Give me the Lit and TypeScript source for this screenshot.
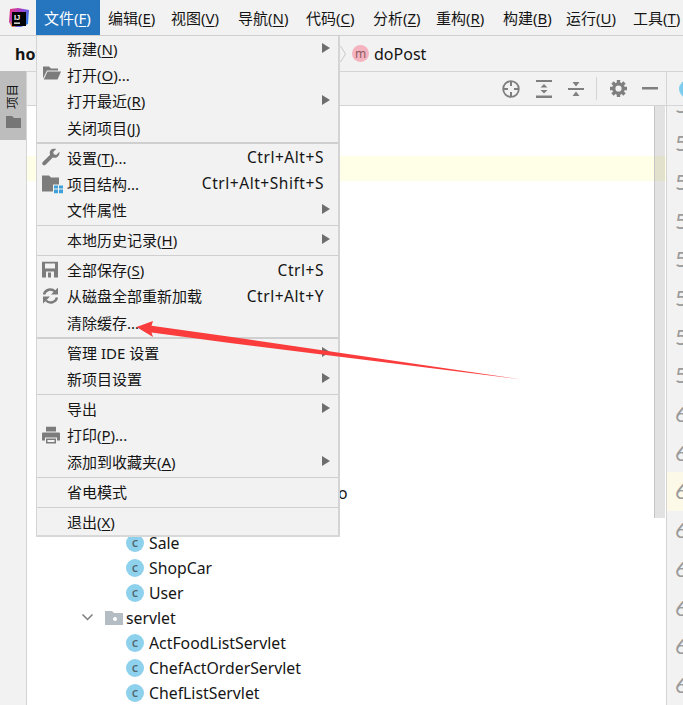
import { LitElement, html, css, svg, nothing } from "lit";
import { customElement } from "lit/decorators.js";
import { styleMap } from "lit/directives/style-map.js";

type Item = { t: string; m?: string; e?: string; k?: string; a?: boolean; i?: string };
const G = "#7c7c7c";
const icons: Record<string, unknown> = {
  open: svg`<path fill="${G}" d="M1 1h6l2 2h7v2H5L1 13z"/><path fill="${G}" d="M5.500 6H19l-3.500 8H1.800z"/>`,
  wrench: svg`<path fill="${G}" d="M17.500 3.200 14.200 6.400l-2.400-.6-.6-2.400L14.400.3c-2.300-.7-4.600-.1-5.800 1.400-1 1.300-1.100 3-.5 4.500L.8 13.400c-.8.9-.8 2 0 2.800.8.8 1.900.8 2.800 0l7.200-7.300c1.500.6 3.200.5 4.500-.5 1.600-1.200 2.400-3 2.200-5.200z"/>`,
  struct: svg`<path fill="${G}" d="M0 1h7l2 2h8v7h-6v7H0z"/><path fill="#3f9fd8" d="M12 11h4v3h-4zM17 11h4v3h-4zM12 15h4v4h-4zM17 15h4v4h-4z"/>`,
  save: svg`<path fill="${G}" fill-rule="evenodd" d="M0 0h16v16H0zM3 2v5h10V2zM4 10v6h8v-6zM6 11h3v5H6z"/>`,
  reload: svg`<path fill="none" stroke="${G}" stroke-width="2.400" d="M2 7a6.500 6.500 0 0 1 11-3M15 10a6.500 6.500 0 0 1-11 3"/><path fill="${G}" d="M16 0v7H9zM1 16V9h7z"/>`,
  print: svg`<path fill="${G}" fill-rule="evenodd" d="M4 0h10v5H4zM1 6h16q1 0 1 1v7h-3v-3H3v3H0V7q0-1 1-1z"/><path fill="${G}" fill-rule="evenodd" d="M4 12h10v5H4zM5.500 13.500v2h7v-2z"/>`,
};
const groups: Item[][] = [
  [
    { t: "新建(", m: "N", e: ")", a: true },
    { t: "打开(", m: "O", e: ")...", i: "open" },
    { t: "打开最近(", m: "R", e: ")", a: true },
    { t: "关闭项目(", m: "J", e: ")" },
  ],
  [
    { t: "设置(", m: "T", e: ")...", k: "Ctrl+Alt+S", i: "wrench" },
    { t: "项目结构...", k: "Ctrl+Alt+Shift+S", i: "struct" },
    { t: "文件属性", a: true },
  ],
  [{ t: "本地历史记录(", m: "H", e: ")", a: true }],
  [
    { t: "全部保存(", m: "S", e: ")", k: "Ctrl+S", i: "save" },
    { t: "从磁盘全部重新加载", k: "Ctrl+Alt+Y", i: "reload" },
    { t: "清除缓存..." },
  ],
  [
    { t: "管理 IDE 设置", a: true },
    { t: "新项目设置", a: true },
  ],
  [
    { t: "导出", a: true },
    { t: "打印(", m: "P", e: ")...", i: "print" },
    { t: "添加到收藏夹(", m: "A", e: ")", a: true },
  ],
  [{ t: "省电模式" }],
  [{ t: "退出(", m: "X", e: ")" }],
];
const thickAfter = [0, 3];
const bar: [string, string, number][] = [
  ["文件(", "F", 64], ["编辑(", "E", 63], ["视图(", "V", 67], ["导航(", "N", 68], ["代码(", "C", 67],
  ["分析(", "Z", 63], ["重构(", "R", 67], ["构建(", "B", 63], ["运行(", "U", 67], ["工具(", "T", 58],
];
const classes = ["Sale", "ShopCar", "User"];
const servlets = ["ActFoodListServlet", "ChefActOrderServlet", "ChefListServlet"];
const lines = Array.from({ length: 16 }, (_, i) => 52 + i);

@customElement("app-root")
export class AppRoot extends LitElement {
  static styles = css`
    :host {
      display: block;
      position: relative;
      width: 683px;
      height: 705px;
      overflow: hidden;
      background: #f2f2f2;
      color: #151515;
      font-family: "Noto Sans", "Noto Sans CJK SC", sans-serif;
      font-size: 15px;
    }
    u { text-underline-offset: 2px; }
    svg { display: block; }
    .menubar {
      display: flex;
      align-items: stretch;
      height: 35px;
      border-bottom: 1px solid #cfcfcf;
      white-space: nowrap;
    }
    .logo { width: 36px; display: flex; align-items: center; padding-left: 9px; box-sizing: border-box; flex: none; }
    .top { padding-left: 8px; box-sizing: border-box; display: flex; align-items: center; flex: none; }
    .top.on { background: #2675bf; color: #fff; }
    .crumb {
      display: grid;
      grid-template-columns: 340px auto;
      height: 35px;
      border-bottom: 1px solid #d4d4d4;
      align-items: center;
    }
    .proj { padding-left: 15px; font-weight: 700; font-size: 16px; }
    .path { display: flex; align-items: center; font-size: 16px; }
    .badge {
      border-radius: 50%;
      display: flex; align-items: center; justify-content: center; flex: none;
    }
    .badge.m { width: 17px; height: 17px; background: #f4b3bf; color: #8c5a60; font-size: 12px; margin: 0 5px 0 6px; }
    .badge.c { width: 18px; height: 18px; background: #8dd1ec; color: #52656f; font-size: 13px; font-weight: 500; margin-right: 5px; padding-bottom: 1px; box-sizing: border-box; }
    .body { display: flex; height: 633px; }
    .side { width: 26px; border-right: 1px solid #d4d4d4; flex: none; }
    .tab {
      margin-top: -1px;
      height: 69px;
      background: #bdbdbd;
      display: flex;
      flex-direction: column;
      align-items: center;
      padding-top: 13px;
      box-sizing: border-box;
      gap: 7px;
    }
    .tab span {
      writing-mode: vertical-rl;
      text-orientation: sideways;
      transform: rotate(180deg);
      font-size: 12.500px;
      line-height: 14px;
    }
    .pane { width: 639px; flex: none; display: flex; flex-direction: column; }
    .tools {
      height: 33px;
      border-bottom: 1px solid #d4d4d4;
      display: flex;
      justify-content: flex-end;
      align-items: center;
      flex: none;
    }
    .tool { width: 32px; display: flex; justify-content: center; }
    .tool.first { margin-right: 1px; }
    .vsep { width: 1px; height: 23px; background: #d4d4d4; margin: 0 5px 0 4px; }
    .tree { flex: 1; position: relative; background: #fff; overflow: hidden; }
    .row { height: 25px; display: flex; align-items: center; white-space: nowrap; font-size: 15.800px; padding-bottom: 2px; box-sizing: border-box; }
    .row.hl { background: #fffee6; }
    .row.cls { padding-left: 99px; }
    .row.pkg { padding-left: 55px; }
    .row.tail { padding-left: 311px; }
    .chev { margin-right: 12px; }
    .folder { margin-right: 3px; }
    .scroll {
      position: absolute;
      top: 0;
      right: 1px;
      width: 10px;
      height: 412px;
      background: rgba(0, 0, 0, 0.115);
      border-left: 1px solid #c6c6c6;
    }
    .right { width: 16px; border-left: 1px solid #d4d4d4; flex: none; display: flex; flex-direction: column; overflow: hidden; }
    .rtop { height: 33px; border-bottom: 1px solid #d4d4d4; flex: none; display: flex; align-items: center; padding-left: 12px; }
    .dot { width: 18px; height: 18px; border-radius: 50%; background: #7fcdee; flex: none; }
    .gutter { flex: 1; overflow: hidden; }
    .nums { margin-top: -20.400px; }
    .num {
      height: 38.700px;
      line-height: 38.700px;
      padding-left: 8px;
      font-size: 22px;
      font-family: "Lato", sans-serif;
      color: #9b9b9b;
      white-space: nowrap;
    }
    .num.cur { background: #fdf9e8; }
    .menu {
      position: absolute;
      left: 36px;
      top: 36px;
      width: 304px;
      box-sizing: border-box;
      background: #f2f2f2;
      border-left: 1px solid #d4d4d4;
      border-right: 2px solid #d4d4d4;
      border-bottom: 2px solid #d8d8d8;
    }
    .item {
      height: 26.300px;
      box-sizing: border-box;
      display: flex;
      align-items: center;
      padding: 0 8px 2px 30px;
      position: relative;
      white-space: nowrap;
    }
    .ico { position: absolute; left: 5px; top: 50%; transform: translateY(-50%); }
    .key { margin-left: auto; margin-right: 6px; font-size: 15.500px; letter-spacing: 0.55px; }
    .arrow {
      margin-left: auto;
      width: 0; height: 0;
      border-left: 8px solid #6e6e6e;
      border-top: 5px solid transparent;
      border-bottom: 5px solid transparent;
      margin-top: -1px;
    }
    .sep { height: 3.700px; display: flex; align-items: center; }
    .sep i { display: block; width: 100%; height: 1px; background: #cfcfcf; }
    .sep.thick i { height: 2px; }
    .mark { position: absolute; inset: 0; pointer-events: none; }
  `;

  render() {
    return html`
      <div class="menubar">
        <div class="logo">
          <svg width="20" height="20" viewBox="0 0 20 20">
            <defs>
              <linearGradient id="lg" x1="0" y1="0" x2="1" y2="0.600">
                <stop offset="0" stop-color="#f2366f" />
                <stop offset="0.500" stop-color="#a03fd0" />
                <stop offset="1" stop-color="#2f7fe8" />
              </linearGradient>
            </defs>
            <path fill="url(#lg)" d="M1 1 9 0l11 2-1 14-7 3H3l-3-5z" />
            <path fill="#f7931e" d="M0 11l3 8 5-1-5-2z" />
            <rect x="3" y="4" width="14" height="14" fill="#000" />
            <text x="5" y="11.500" font-size="7.500" font-weight="700" fill="#fff" font-family="Liberation Sans">IJ</text>
            <rect x="5" y="14.500" width="6" height="1.300" fill="#fff" />
          </svg>
        </div>
        ${bar.map(
          ([t, m, w], i) =>
            html`<div class="top ${i === 0 ? "on" : ""}" style=${styleMap({ width: `${w}px` })}>${t}<u>${m}</u>)</div>`
        )}
      </div>
      <div class="crumb">
        <div class="proj">hot</div>
        <div class="path">
          <svg width="6" height="16" viewBox="0 0 6 16">
            <path fill="none" stroke="#c8c8c8" d="M.5 0l5 8-5 8" />
          </svg>
          <span class="badge m">m</span>doPost
        </div>
      </div>
      <div class="body">
        <div class="side">
          <div class="tab">
            <span>项目</span>
            <svg width="15" height="12" viewBox="0 0 15 12">
              <path fill="#767676" d="M0 0h6l2 2h7v10H0z" />
            </svg>
          </div>
        </div>
        <div class="pane">
          <div class="tools">
            <div class="tool first">
              <svg width="18" height="18" viewBox="0 0 18 18">
                <circle cx="9" cy="9" r="7.800" fill="none" stroke="#7f7f7f" stroke-width="1.800" />
                <path stroke="#7f7f7f" stroke-width="2" d="M9 1v5M9 12v5M1 9h5M12 9h5" />
              </svg>
            </div>
            <div class="tool">
              <svg width="16" height="18" viewBox="0 0 16 18">
                <path fill="#7f7f7f" d="M0 0h16v2H0zM0 15.500h16V18H0zM8 4l3.500 3.500h-7zM8 13.500 4.500 10h7z" />
              </svg>
            </div>
            <div class="tool">
              <svg width="16" height="18" viewBox="0 0 16 18">
                <path fill="#7f7f7f" d="M0 8h16v2H0zM8 6.500 4.500 2h7zM8 11.500l3.500 4.500h-7z" />
              </svg>
            </div>
            <div class="vsep"></div>
            <div class="tool">
              <svg width="17" height="17" viewBox="0 0 17 17">
                <circle cx="8.500" cy="8.500" r="4.700" fill="none" stroke="#7f7f7f" stroke-width="3.200" />
                <path stroke="#7f7f7f" stroke-width="3.400" d="M8.500 0v3M8.500 14v3M0 8.500h3M14 8.500h3M2.500 2.500l2 2M12.500 12.500l2 2M2.500 14.500l2-2M12.500 4.500l2-2" />
              </svg>
            </div>
            <div class="tool">
              <svg width="16" height="3" viewBox="0 0 16 3"><path fill="#7f7f7f" d="M0 0h16v2.500H0z" /></svg>
            </div>
          </div>
          <div class="tree">
            ${Array.from({ length: 15 }, (_, i) => html`<div class="row ${i === 2 ? "hl" : ""}"></div>`)}
            <div class="row tail">o</div>
            <div class="row"></div>
            ${classes.map((n) => html`<div class="row cls"><span class="badge c">c</span>${n}</div>`)}
            <div class="row pkg">
              <svg class="chev" width="11" height="7" viewBox="0 0 11 7">
                <path fill="none" stroke="#7d7d7d" stroke-width="1.500" d="M.5.5l5 5 5-5" />
              </svg>
              <svg class="folder" width="18" height="14" viewBox="0 0 18 14">
                <path fill="#b4bcc4" d="M0 0h7l2 2h9v12H0z" />
                <circle cx="10" cy="8" r="2" fill="#fff" />
              </svg>
              servlet
            </div>
            ${servlets.map((n) => html`<div class="row cls"><span class="badge c">c</span>${n}</div>`)}
            <div class="scroll"></div>
          </div>
        </div>
        <div class="right">
          <div class="rtop"><span class="dot"></span></div>
          <div class="gutter">
            <div class="nums">
              ${lines.map((n) => html`<div class="num ${n === 62 ? "cur" : ""}">${n}</div>`)}
            </div>
          </div>
        </div>
      </div>
      <div class="menu">
        ${groups.map(
          (g, gi) => html`
            ${gi ? html`<div class="sep ${thickAfter.includes(gi - 1) ? "thick" : ""}"><i></i></div>` : nothing}
            ${g.map(
              (it) => html`<div class="item">
                ${it.i
                  ? html`<svg class="ico" width="22" height="19" viewBox="0 0 22 19">${icons[it.i]}</svg>`
                  : nothing}
                <span>${it.t}${it.m ? html`<u>${it.m}</u>` : nothing}${it.e ?? ""}</span>
                ${it.k ? html`<span class="key">${it.k}</span>` : nothing}
                ${it.a ? html`<span class="arrow"></span>` : nothing}
              </div>`
            )}
          `
        )}
      </div>
      <svg class="mark" width="683" height="705" viewBox="0 0 683 705">
        <path
          fill="#fa3c3c"
          d="M136.500 327 153 321l-1.500 4.700L230 336.700 522 379.500 230 343l-78.500-10.500L153 337z"
        />
      </svg>
    `;
  }
}
